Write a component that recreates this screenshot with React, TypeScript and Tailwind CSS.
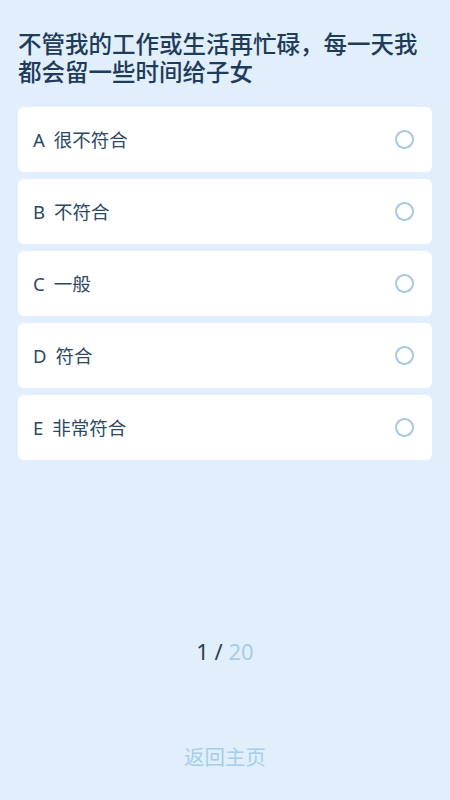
import { useState } from "react";

const options = [
  { key: "A", label: "很不符合" },
  { key: "B", label: "不符合" },
  { key: "C", label: "一般" },
  { key: "D", label: "符合" },
  { key: "E", label: "非常符合" },
];

const font = {
  fontFamily: '"Noto Sans", "Noto Sans CJK SC", sans-serif',
};

export default function App() {
  const [picked, setPicked] = useState<string | null>(null);

  return (
    <div className="h-[800px] w-full bg-[#e1effc] flex flex-col overflow-hidden" style={font}>
      <div className="px-[18px] pt-[30px]">
        <h1 className="text-[23.5px] leading-[28px] font-medium text-[#1f3b5a]">
          不管我的工作或生活再忙碌，每一天我都会留一些时间给子女
        </h1>
      </div>

      <div className="px-[18px] pt-[21px] flex flex-col gap-[7px]">
        {options.map((o) => (
          <button
            key={o.key}
            onClick={() => setPicked(o.key)}
            className="h-[65px] w-full bg-white rounded-[6px] flex items-center justify-between pl-[15px] pr-[18px] text-left"
          >
            <span className="text-[18.5px] text-[#2b4864] flex items-center gap-[9px]">
              <span>{o.key}</span>
              <span>{o.label}</span>
            </span>
            <span
              className={`size-[19px] rounded-full border-2 ${
                picked === o.key ? "border-[#4a90d9] bg-[#4a90d9]" : "border-[#aac6dd]"
              }`}
            />
          </button>
        ))}
      </div>

      <div className="text-center text-[22px] text-[#2a3e55] mt-[175px] mb-[74px]">
        1 / <span className="text-[#a8cbe8]">20</span>
      </div>

      <div className="text-center text-[20.5px] text-[#a9cde9]">返回主页</div>
    </div>
  );
}
